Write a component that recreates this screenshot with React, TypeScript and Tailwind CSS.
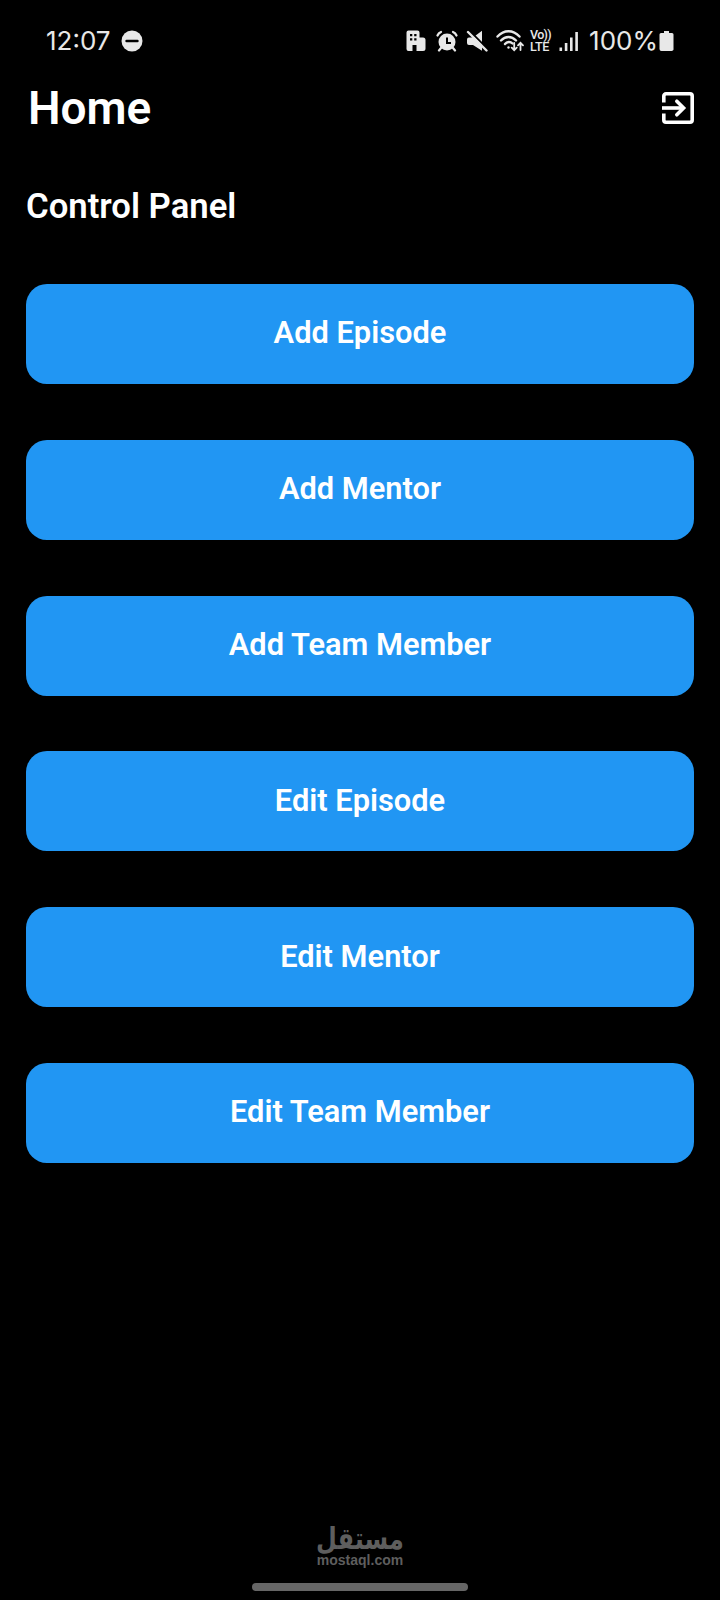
const actions = [
  "Add Episode",
  "Add Mentor",
  "Add Team Member",
  "Edit Episode",
  "Edit Mentor",
  "Edit Team Member",
];

const StatusBar = () => (
  <div className="flex h-20 items-center px-[46px] pt-px text-[#e8e8e8]">
    <span className="font-['Inter',sans-serif] text-[26px] leading-none">12:07</span>
    <svg className="ml-[10px] size-[22px]" viewBox="0 0 22 22">
      <circle cx="11" cy="11" r="10.5" fill="currentColor" />
      <path d="M5.5 11h11" stroke="#000" strokeWidth="2.4" strokeLinecap="round" />
    </svg>
    <div className="ml-auto flex items-center">
      <svg className="h-[22px] w-5" viewBox="0 0 20 22" fill="currentColor">
        <path d="M3 .5h8.500a2 2 0 0 1 2 2v5H17a2.500 2.500 0 0 1 2.500 2.500v8.500A2.500 2.500 0 0 1 17 21h-6.500v-6h-4v6H2.500A2 2 0 0 1 .500 19V2.500A2 2 0 0 1 2.500 .5z" />
        <path d="M4 4h2.300v2.300H4zM8.200 4h2.300v2.300H8.200zM4 8.200h2.300v2.300H4zM8.200 8.200h2.300v2.300H8.200z" fill="#000" />
      </svg>
      <svg className="ml-[10px] size-[22px]" viewBox="0 0 22 22">
        <circle cx="11" cy="12" r="8.500" fill="currentColor" />
        <path d="M1.500 5.500C2.200 3.800 3.300 2.700 5 2M20.500 5.500C19.800 3.800 18.700 2.700 17 2M5 18l-2 2.500M17 18l2 2.500" fill="none" stroke="currentColor" strokeWidth="2.200" strokeLinecap="round" />
        <path d="M11 7.500V13h4" fill="none" stroke="#000" strokeWidth="2" />
      </svg>
      <svg className="ml-2 size-[22px]" viewBox="0 0 22 22">
        <path d="M3 7.500h4L16 .800v20L7 15H3a2 2 0 0 1-2-2V9.500a2 2 0 0 1 2-2z" fill="currentColor" />
        <path d="M4.500 1.800 22 19.300" stroke="#000" strokeWidth="2" />
        <path d="M2 2 20.500 20.500" stroke="currentColor" strokeWidth="2.400" strokeLinecap="round" />
      </svg>
      <svg className="ml-2 h-[22px] w-7" viewBox="0 0 28 22" fill="none" stroke="currentColor" strokeWidth="2.400" strokeLinecap="round">
        <path d="M1.500 6.500C8-.500 17-.500 23.500 6.500M5 10.500c4.500-4.700 10.500-4.700 15 0M9 14c2-2.500 5.500-2.500 7.500-.500" />
        <path d="M12.500 17.500v.100" />
        <path d="M18.200 13v7m-2.500-2.300 2.500 2.500 2.500-2.500M24.500 20v-7M22 15.300l2.500-2.500 2.500 2.500" strokeWidth="1.800" />
      </svg>
      <div className="ml-[6px] flex w-[22px] flex-col font-['Roboto',sans-serif] text-[12.5px] leading-[12px] font-medium whitespace-nowrap">
        <span className="tracking-[-0.7px]">Vo))</span>
        <span className="tracking-[-0.3px]">LTE</span>
      </div>
      <svg className="ml-[7px] h-[22px] w-5" viewBox="0 0 20 22" fill="currentColor">
        <path d="M.500 17.500h2.600V21H.500zM5.800 13h2.600v8H5.800zM11 7.500h2.600V21H11zM16.300 2h2.600v19h-2.600z" />
      </svg>
      <span className="ml-[10px] font-['Inter',sans-serif] text-[26px] leading-none">100%</span>
      <svg className="ml-px h-[22px] w-[15px]" viewBox="0 0 15 22" fill="currentColor">
        <path d="M5 1h5v2h3a1.500 1.500 0 0 1 1.500 1.500v14A2 2 0 0 1 12.500 21h-10a2 2 0 0 1-2-2V4.500A1.500 1.500 0 0 1 2 3h3z" />
      </svg>
    </div>
  </div>
);

const ExitIcon = () => (
  <svg className="size-8" viewBox="0 0 32 32" fill="none" stroke="currentColor" strokeWidth="3.600">
    <path d="M1.800 10.500V4a2.200 2.200 0 0 1 2.200-2.200h24A2.200 2.200 0 0 1 30.200 4v24a2.200 2.200 0 0 1-2.200 2.200H4A2.200 2.200 0 0 1 1.800 28v-6.500" />
    <path d="M0 16h21" />
    <path d="M14.800 9.200 21.600 16l-6.800 6.800" strokeLinecap="round" />
  </svg>
);

const App = () => (
  <main className="flex h-[1600px] w-[720px] flex-col overflow-hidden bg-black font-['Roboto',sans-serif] text-white">
    <StatusBar />

    <header className="flex h-14 items-center justify-between pr-[26px] pb-px pl-7">
      <h1 className="text-[46px] leading-none font-semibold">Home</h1>
      <button type="button" aria-label="Log out">
        <ExitIcon />
      </button>
    </header>

    <section className="px-[26px] pt-[47px]">
      <h2 className="text-[34.7px] leading-[46px] font-semibold">Control Panel</h2>
      <div className="mt-[55px] grid gap-[55.8px]">
        {actions.map((label) => (
          <button
            key={label}
            type="button"
            className="h-[100px] rounded-[21px] bg-[#2196f3] pb-px text-[30.8px] font-semibold"
          >
            {label}
          </button>
        ))}
      </div>
    </section>

    <footer className="mt-auto flex flex-col items-center pb-[9px] text-[#5e5e5e]">
      <span dir="rtl" lang="ar" className="scale-x-[0.8] font-['DejaVu_Sans',sans-serif] text-[30px] leading-[28px] font-bold">
        مستقل
      </span>
      <span className="font-['Liberation_Sans',sans-serif] text-[14px] leading-[14px] font-bold">mostaql.com</span>
      <div className="mt-4 h-2 w-[216px] rounded-full bg-[#666]" />
    </footer>
  </main>
);

export default App;
